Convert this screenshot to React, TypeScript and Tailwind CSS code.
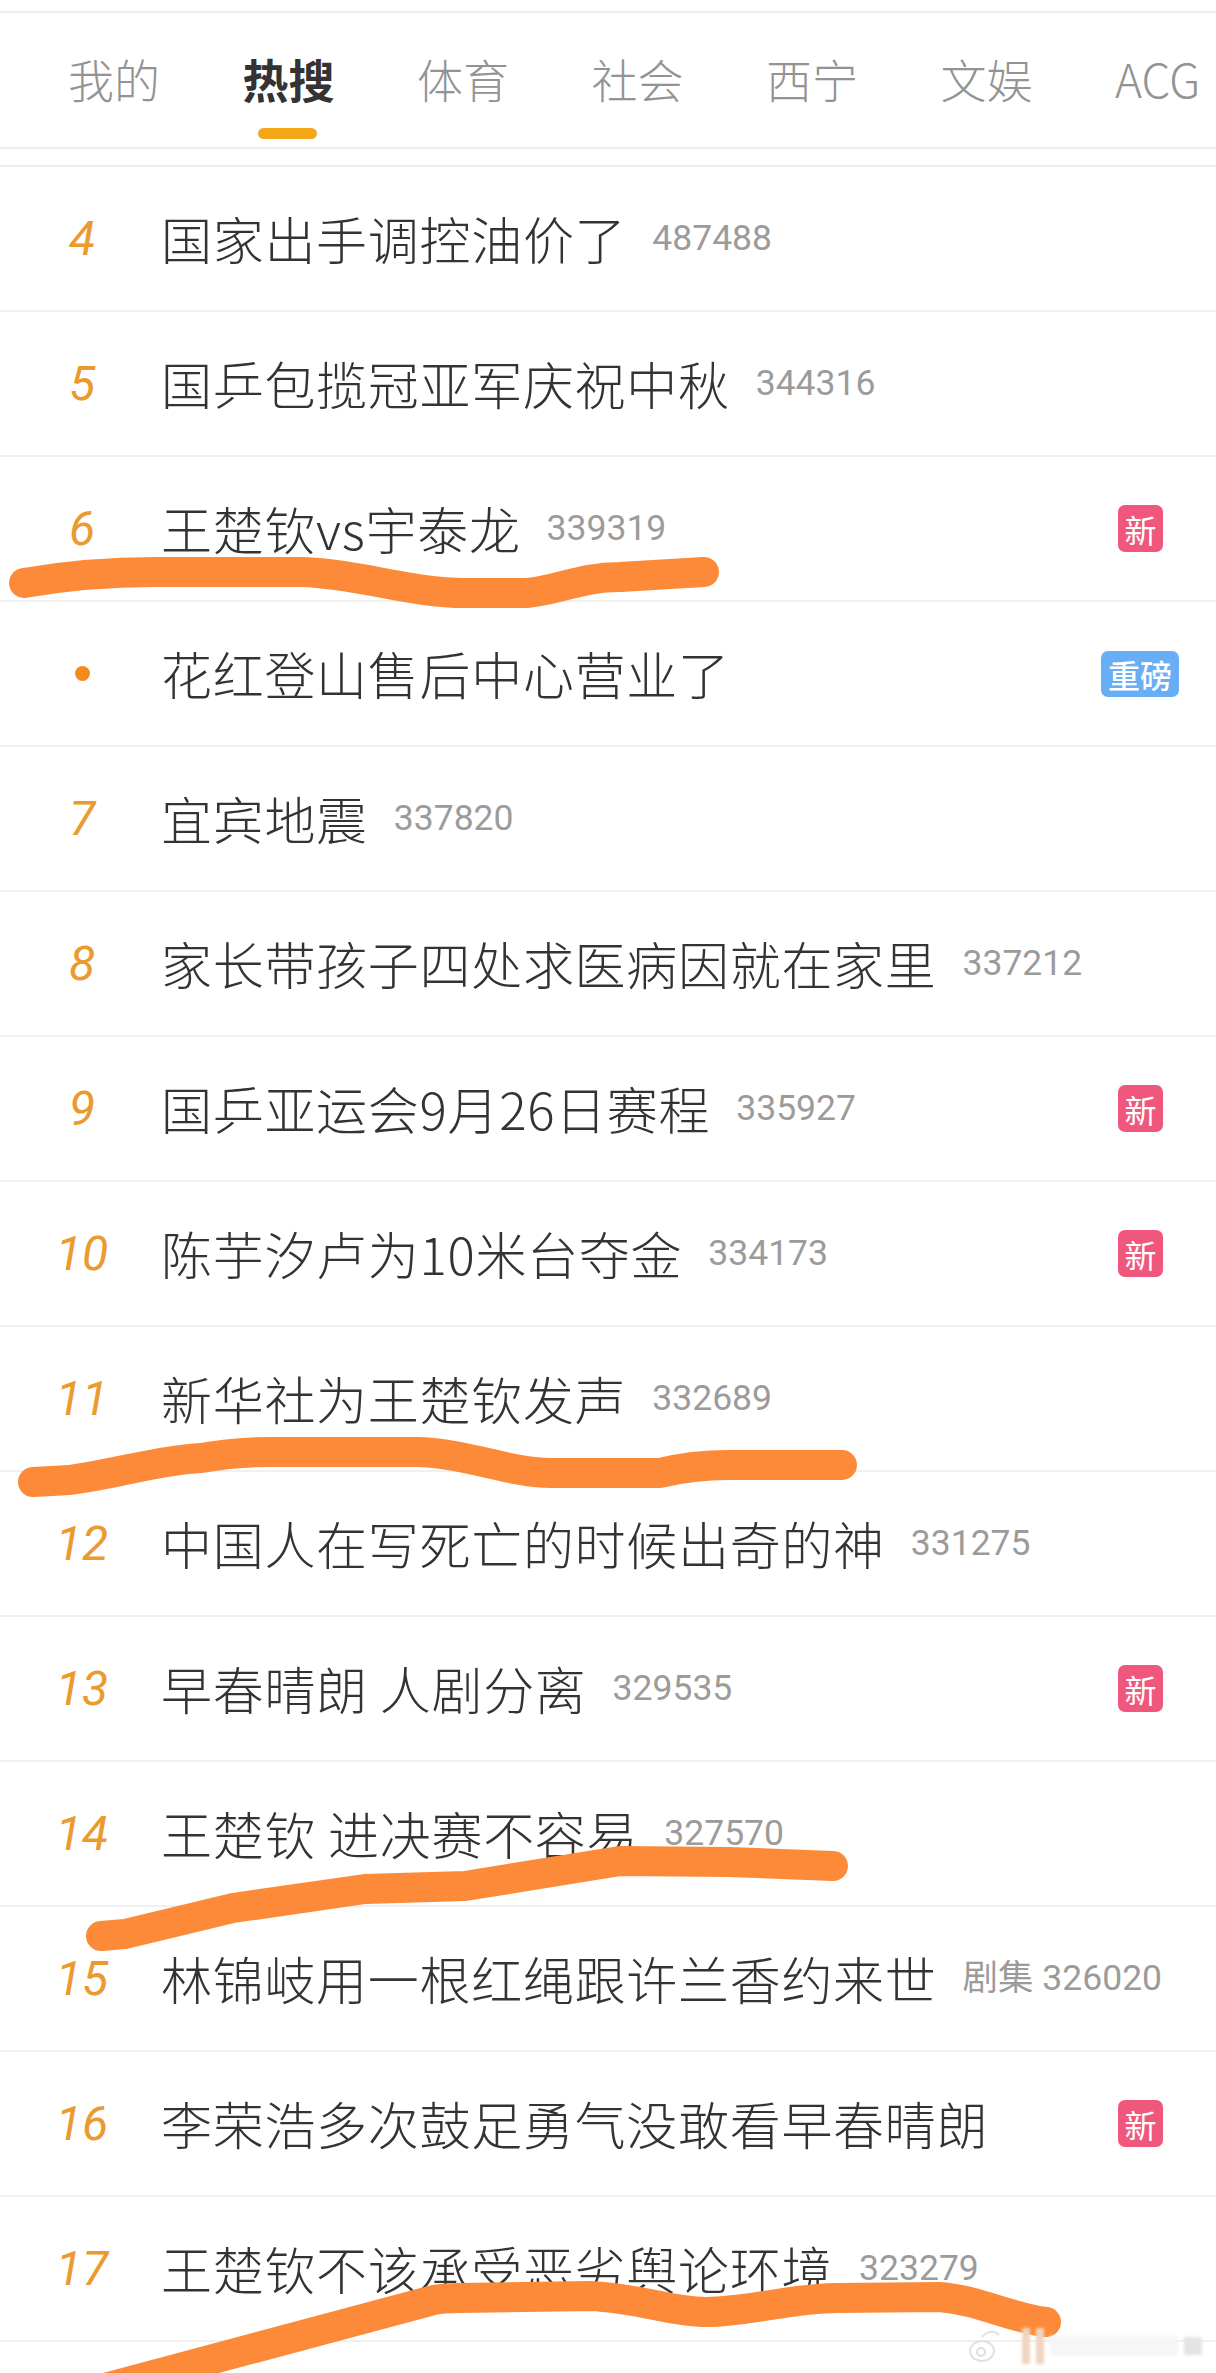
const tabs = ["我的", "热搜", "体育", "社会", "西宁", "文娱", "ACG"];

type BadgeKind = "new" | "heavy";

interface HotRow {
  rank?: number;
  title: string;
  count?: string;
  badge?: BadgeKind;
}

const rows: HotRow[] = [
  { rank: 4, title: "国家出手调控油价了", count: "487488" },
  { rank: 5, title: "国乒包揽冠亚军庆祝中秋", count: "344316" },
  { rank: 6, title: "王楚钦vs宇泰龙", count: "339319", badge: "new" },
  { title: "花红登山售后中心营业了", badge: "heavy" },
  { rank: 7, title: "宜宾地震", count: "337820" },
  { rank: 8, title: "家长带孩子四处求医病因就在家里", count: "337212" },
  { rank: 9, title: "国乒亚运会9月26日赛程", count: "335927", badge: "new" },
  { rank: 10, title: "陈芋汐卢为10米台夺金", count: "334173", badge: "new" },
  { rank: 11, title: "新华社为王楚钦发声", count: "332689" },
  { rank: 12, title: "中国人在写死亡的时候出奇的神", count: "331275" },
  { rank: 13, title: "早春晴朗 人剧分离", count: "329535", badge: "new" },
  { rank: 14, title: "王楚钦 进决赛不容易", count: "327570" },
  { rank: 15, title: "林锦岐用一根红绳跟许兰香约来世", count: "剧集 326020" },
  { rank: 16, title: "李荣浩多次鼓足勇气没敢看早春晴朗", badge: "new" },
  { rank: 17, title: "王楚钦不该承受恶劣舆论环境", count: "323279" },
];

// hand-drawn marker strokes across the screenshot
const strokes: string[] = [
  "M24 583 C70 575 110 572 155 572 L302 572 C360 574 410 593 465 593 L527 593 C560 590 580 577 620 577 L704 572",
  "M33 1482 L70 1480 C120 1473 160 1460 201 1458 C225 1454 250 1452 270 1452 L419 1452 C470 1454 510 1473 551 1473 L660 1473 C680 1468 705 1465 729 1465 L842 1465",
  "M101 1936 L125 1934 L233 1908 L365 1889 L465 1886 L620 1861 L729 1862 L833 1866",
  "M90 2392 L430 2301 C440 2298 450 2298 460 2298 L590 2296 C640 2298 670 2312 706 2312 C750 2312 790 2298 838 2298 L939 2297 C980 2300 1010 2318 1046 2322",
];

function Badge({ kind }: { kind: BadgeKind }) {
  if (kind === "new") {
    return (
      <span className="mr-[53px] flex h-[47px] w-[45px] items-center justify-center rounded-[7px] bg-[#f0577c] text-[32px] leading-none text-white">
        新
      </span>
    );
  }
  return (
    <span className="mr-[37px] flex h-[46px] w-[78px] items-center justify-center rounded-[7px] bg-[#68aef6] text-[32px] font-medium leading-none text-white">
      重磅
    </span>
  );
}

export default function App() {
  return (
    <div
      className="relative h-[2373px] w-[1216px] overflow-hidden bg-white"
      style={{ fontFamily: '"Noto Sans CJK SC", "Noto Sans", sans-serif' }}
    >
      <div className="mt-[11px] h-[138px] border-y-2 border-[#ececec]">
        <div className="flex h-full items-start gap-[82.5px] pl-[68px] pt-[32px]">
          {tabs.map((tab) => (
            <div key={tab} className="relative shrink-0">
              <span
                className={
                  tab === "热搜"
                    ? "text-[46px] font-bold leading-[66px] text-[#333333]"
                    : "text-[46px] font-light leading-[66px] text-[#939393]"
                }
              >
                {tab}
              </span>
              {tab === "热搜" && (
                <div className="absolute left-[15px] top-[83px] h-[11px] w-[59px] rounded-full bg-[#f4a716]" />
              )}
            </div>
          ))}
        </div>
      </div>

      <div className="mt-[16px] border-t-2 border-[#ececec]">
        {rows.map((row) => (
          <div
            key={row.title}
            className="box-border flex h-[145px] items-center border-b-2 border-[#f0f0f0]"
          >
            <div className="flex w-[161px] shrink-0 justify-center pl-[3px]">
              {row.rank ? (
                <span
                  className="text-[48px] italic leading-none text-[#ea9a2e]"
                  style={{ fontFamily: '"Roboto", sans-serif' }}
                >
                  {row.rank}
                </span>
              ) : (
                <span className="h-[15px] w-[15px] rounded-full bg-[#f58a1c]" />
              )}
            </div>
            <span className="whitespace-nowrap text-[51px] font-light leading-none tracking-[0.7px] text-[#333333]">
              {row.title}
            </span>
            {row.count && (
              <span
                className="ml-[26px] whitespace-nowrap text-[35.5px] leading-none text-[#9b9b9b]"
                style={{ fontFamily: '"Roboto", "Noto Sans CJK SC", sans-serif' }}
              >
                {row.count}
              </span>
            )}
            {row.badge && (
              <div className="ml-auto">
                <Badge kind={row.badge} />
              </div>
            )}
          </div>
        ))}
      </div>

      <svg
        className="absolute left-0 top-0"
        width="1216"
        height="2373"
        viewBox="0 0 1216 2373"
        fill="none"
        aria-hidden="true"
      >
        {strokes.map((d) => (
          <path
            key={d}
            d={d}
            stroke="#fd8a38"
            strokeWidth="30"
            strokeLinecap="round"
            strokeLinejoin="round"
          />
        ))}
      </svg>

      {/* blurred weibo watermark */}
      <div className="absolute left-[968px] top-[2328px] flex h-[36px] w-[234px] items-center gap-[22px]">
        <svg width="32" height="36" viewBox="0 0 32 36" fill="none" aria-hidden="true">
          <ellipse cx="14" cy="23" rx="12" ry="10" stroke="#e2e2e2" strokeWidth="2" />
          <circle cx="13" cy="24" r="4" stroke="#dddddd" strokeWidth="2" />
          <path d="M14 9C19 3 26 2 31 7" stroke="#e2e2e2" strokeWidth="2" />
        </svg>
        <div className="flex h-full flex-1 items-center gap-[6px] blur-[1.5px]">
          <div className="h-full w-[8px] bg-[#efd5c2]" />
          <div className="h-full w-[8px] bg-[#efd5c2]" />
          <div className="h-[20px] flex-1 bg-[#f6f6f6]" />
          <div className="h-[18px] w-[18px] bg-[#e4e4e4]" />
        </div>
      </div>
    </div>
  );
}
